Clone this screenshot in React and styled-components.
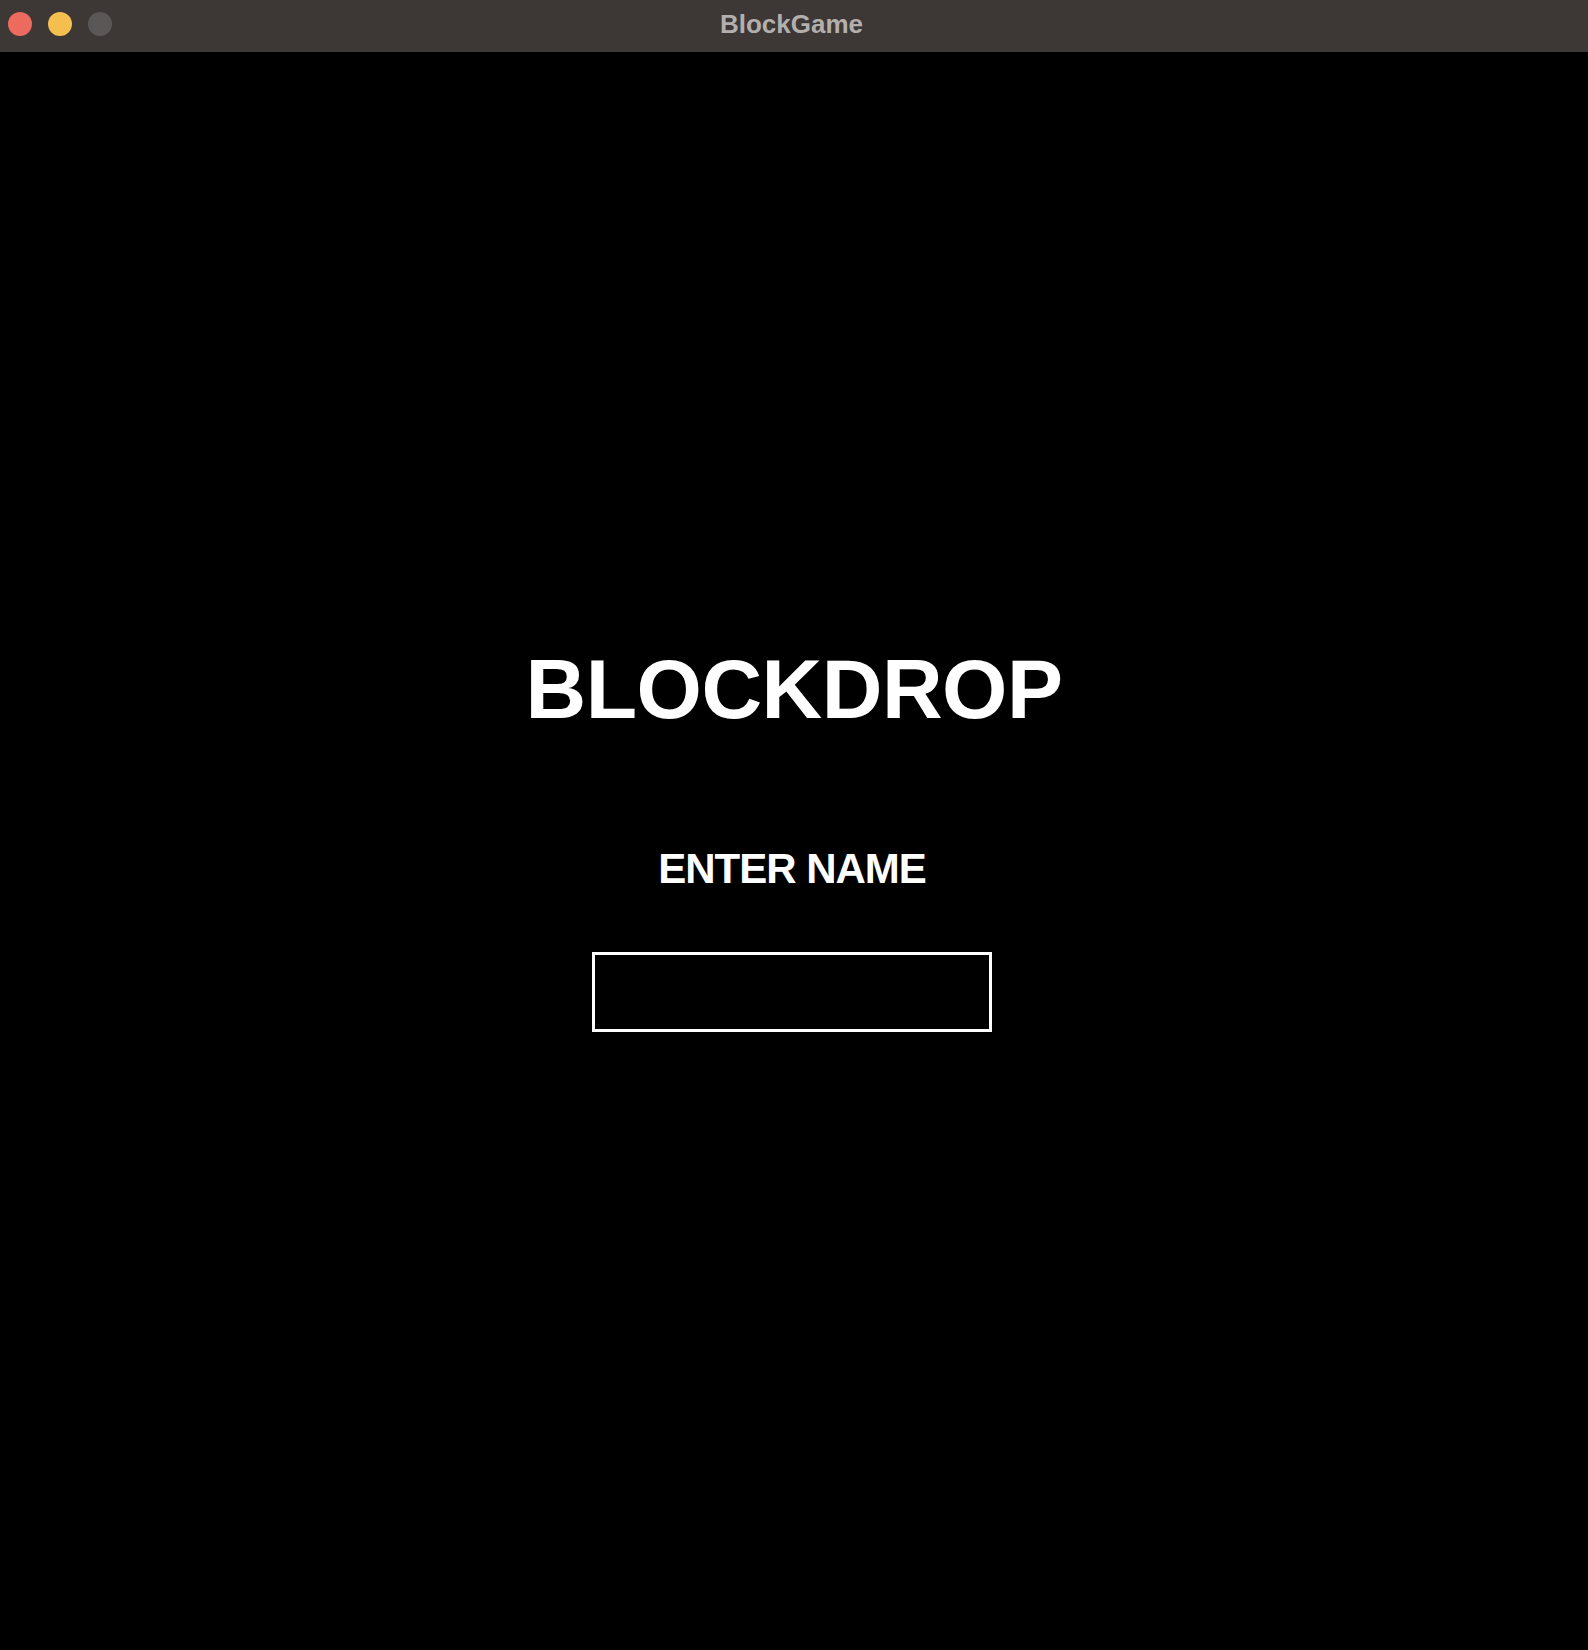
import React, { useState } from "react";
import styled, { createGlobalStyle } from "styled-components";

const GlobalStyle = createGlobalStyle`
  html, body {
    margin: 0;
    padding: 0;
    background: #000;
  }
  body {
    font-family: "Liberation Sans", Arial, sans-serif;
  }
`;

const Window = styled.div`
  width: 1588px;
  height: 1650px;
  display: flex;
  flex-direction: column;
  background: #000;
  overflow: hidden;
`;

const TitleBar = styled.div`
  height: 52px;
  flex-shrink: 0;
  box-sizing: border-box;
  padding-bottom: 4px;
  background: #3d3836;
  display: grid;
  grid-template-columns: 1fr auto 1fr;
  align-items: center;
`;

const Lights = styled.div`
  display: flex;
  gap: 16px;
  padding-left: 8px;
`;

const Light = styled.span`
  width: 24px;
  height: 24px;
  border-radius: 50%;
  background: ${({ color }) => color};
`;

const Title = styled.div`
  font-size: 26px;
  font-weight: 700;
  color: #b3afad;
  margin-right: 5px;
`;

// game canvas content sits a couple of px left of the window centre
const Screen = styled.div`
  flex: 1;
  display: flex;
  flex-direction: column;
  align-items: center;
  padding-top: 595px;
  padding-right: 4px;
  color: #fff;
`;

const Logo = styled.h1`
  margin: 0 0 0 4px;
  font-size: 84px;
  line-height: 84px;
  font-weight: 700;
  letter-spacing: -0.5px;
`;

const Label = styled.div`
  margin-top: 117px;
  font-size: 42px;
  line-height: 42px;
  font-weight: 700;
  letter-spacing: -1px;
`;

const NameInput = styled.input`
  margin-top: 62px;
  box-sizing: border-box;
  width: 400px;
  height: 80px;
  background: #000;
  border: 3px solid #fff;
  border-radius: 0;
  outline: none;
  color: #fff;
  font-family: inherit;
  font-size: 36px;
  font-weight: 700;
  text-align: center;
`;

export default function App() {
  const [name, setName] = useState("");

  return (
    <Window>
      <GlobalStyle />
      <TitleBar>
        <Lights>
          <Light color="#ec6a5e" />
          <Light color="#f4bf4f" />
          <Light color="#5b5756" />
        </Lights>
        <Title>BlockGame</Title>
        <div />
      </TitleBar>
      <Screen>
        <Logo>BLOCKDROP</Logo>
        <Label>ENTER NAME</Label>
        <NameInput value={name} onChange={(e) => setName(e.target.value)} />
      </Screen>
    </Window>
  );
}
